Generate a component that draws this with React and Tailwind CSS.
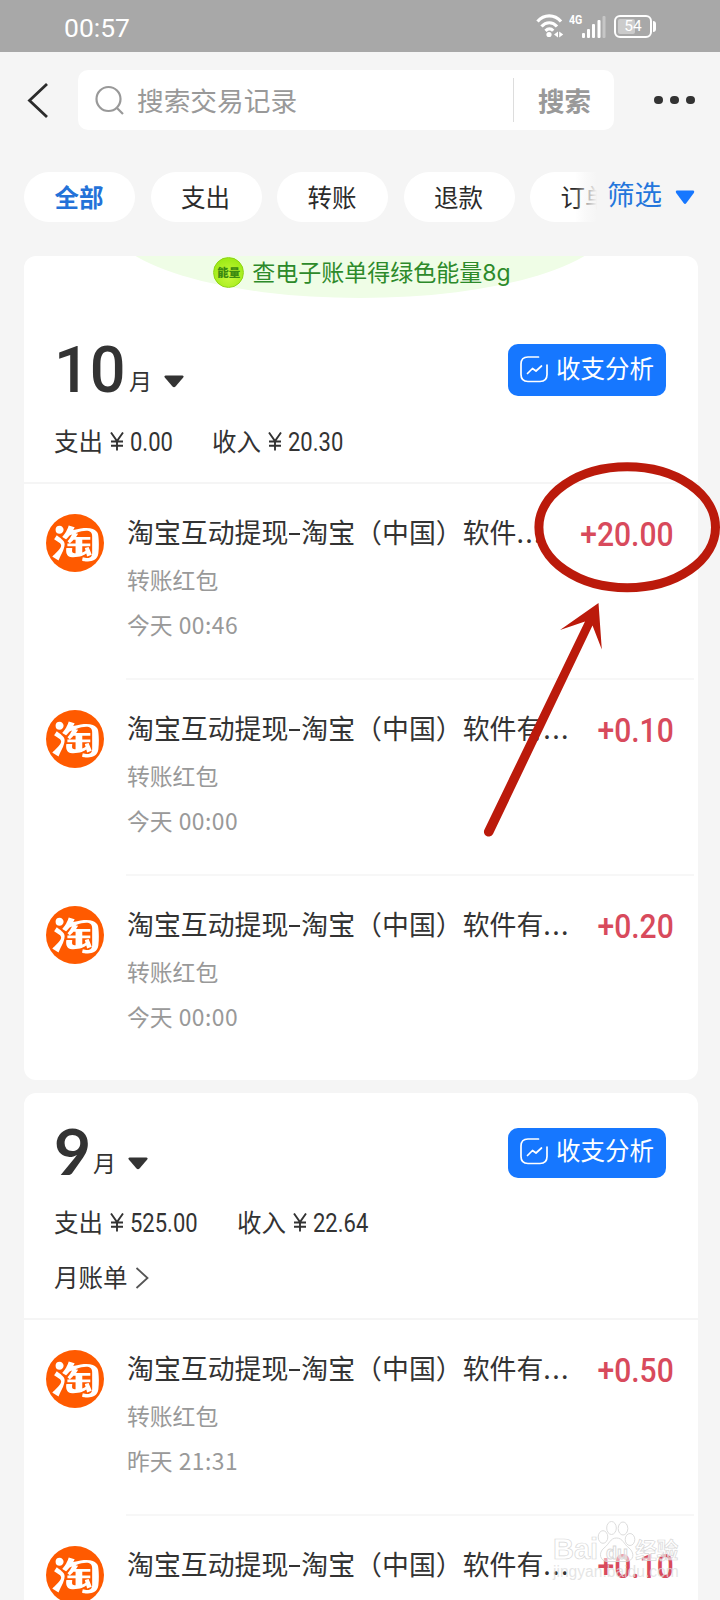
import { AiFillTaobaoCircle } from "react-icons/ai";

const months = [
  {
    month: "10",
    out: "0.00",
    outWidth: "w-[44px]",
    income: "20.30",
    banner: true,
    records: [
      { short: true, time: "今天 00:46", amount: "+20.00" },
      { time: "今天 00:00", amount: "+0.10" },
      { time: "今天 00:00", amount: "+0.20" },
    ],
  },
  {
    month: "9",
    out: "525.00",
    outWidth: "w-[69px]",
    income: "22.64",
    bill: true,
    records: [
      { time: "昨天 21:31", amount: "+0.50" },
      { time: "昨天 21:30", amount: "+0.10" },
    ],
  },
];

const StatusBar = () => (
  <div className="flex h-[52px] shrink-0 items-center justify-between bg-[#a8a8a8] pl-[64px] pr-[64px] text-white">
    <span className="mt-[3px] font-['Roboto'] text-[26.5px] leading-8">00:57</span>
    <div className="flex items-center">
      <svg width="28" height="26" viewBox="0 0 28 26" fill="none" stroke="#fff" strokeWidth="3.200">
        <path d="M1.5 8.5C8 1 18.500 1 25 8.500" />
        <path d="M5.500 13.500C10 8.500 16.500 8.500 21 13.500" />
        <path d="M9.500 17.800C12 15.300 15 15.300 17.200 17.800" />
        <circle cx="13" cy="21.500" r="2.600" fill="#fff" stroke="none" />
        <path d="M22 18.500v6l-4-3zM23.200 18.500v6l4-3z" fill="#fff" stroke="none" />
      </svg>
      <span className="ml-[5px] -mt-[13px] w-[13px] origin-left scale-x-85 font-['Roboto'] text-[12.5px] font-bold leading-3">4G</span>
      <svg className="mt-[2px]" width="24" height="24" viewBox="0 0 24 24" fill="#fff">
        <rect x="0" y="18" width="3" height="5" rx="1" />
        <rect x="5" y="14" width="3" height="9" rx="1" />
        <rect x="10" y="9" width="3" height="14" rx="1" />
        <rect x="15.500" y="5" width="3" height="18" rx="1" />
        <rect x="20.500" y="1" width="3" height="22" rx="1" fillOpacity="0.350" />
      </svg>
      <div className="relative ml-[8px] flex h-[23px] w-[38px] items-center justify-center rounded-[6px] border-2 border-white">
        <div className="absolute left-[2px] top-[2px] h-[15px] w-[17px] rounded-[2px] bg-white/40" />
        <span className="relative font-['Roboto'] text-[15.5px] leading-4">54</span>
      </div>
      <div className="ml-[1px] h-[11px] w-[3px] rounded-r-sm bg-white" />
    </div>
  </div>
);

const Header = () => (
  <div className="flex h-[60px] shrink-0 items-center mt-[18px] pl-[26px]">
    <svg width="22" height="38" viewBox="0 0 22 38" fill="none" stroke="#2b2b2b" strokeWidth="2.800">
      <path d="M21 3L3.500 19.500L21 36" />
    </svg>
    <div className="ml-[30px] flex h-[60px] w-[536px] items-center rounded-[10px] bg-white text-[#999]">
      <svg className="ml-[17px]" width="30" height="30" viewBox="0 0 30 30" fill="none" stroke="#999" strokeWidth="2.200">
        <circle cx="13.500" cy="14" r="12" />
        <path d="M21.500 22.500L28 29" />
      </svg>
      <span className="ml-[12px] text-[26.7px] leading-8">搜索交易记录</span>
      <div className="ml-auto h-[44px] w-[1.500px] bg-[#ddd]" />
      <span className="ml-[24px] mr-[23px] text-[26.5px] font-bold leading-8">搜索</span>
    </div>
    <div className="ml-[40px] flex gap-[7.500px]">
      <i className="h-[8.500px] w-[8.500px] rounded-full bg-[#333]" />
      <i className="h-[8.500px] w-[8.500px] rounded-full bg-[#333]" />
      <i className="h-[8.500px] w-[8.500px] rounded-full bg-[#333]" />
    </div>
  </div>
);

const Chips = () => (
  <div className="mt-[42px] flex h-[50px] shrink-0 pl-6">
    <div className="relative flex w-[573px] gap-[15.500px] overflow-hidden">
      {["全部", "支出", "转账", "退款", "订单"].map((name, i) => (
        <div
          key={name}
          className={`flex h-[50px] w-[111px] shrink-0 items-center justify-center rounded-full bg-white pr-[1px] text-[24.500px] ${
            i === 0 ? "font-bold text-[#2472d8]" : "text-[#2b2b2b]"
          }`}
        >
          {name}
        </div>
      ))}
      <div className="absolute right-0 top-0 h-full w-[22px] bg-linear-to-r from-[#f5f5f5]/0 via-[#f5f5f5]/60 to-[#f5f5f5]" />
    </div>
    <span className="ml-[10px] mt-[2px] h-8 text-[27.500px] leading-[38px] text-[#2476dc]">筛选</span>
    <svg className="ml-[13px] mt-[18px]" width="20" height="15" viewBox="0 0 20 15" fill="#1677ff">
      <path d="M2 0.500H18Q20 1 18.800 3L11.400 13Q10 14.800 8.600 13L1.200 3Q0 1 2 0.500Z" />
    </svg>
  </div>
);

const Banner = () => (
  <div className="relative flex h-[42px] justify-center overflow-hidden">
    <div className="absolute -top-[112px] left-[84px] h-[154px] w-[504px] rounded-[50%] bg-[#effde6]" />
    <div className="relative ml-[2px] flex h-[31px]">
      <span className="mt-px flex h-[31px] w-[31px] items-center justify-center rounded-full border border-[#8fd414] bg-[radial-gradient(circle_at_50%_65%,#c8f83c,#8fe60a)] text-[11.500px] font-black text-[#3c8a10]">
        能量
      </span>
      <span className="ml-[8px] text-[23px] leading-[30px] text-[#2d8a2a]">
        查电子账单得绿色能量<span className="font-['Inter']">8g</span>
      </span>
    </div>
  </div>
);

const AnalyseButton = ({ tall }) => (
  <button className={`flex w-[158px] items-start rounded-[10px] bg-[#1677ff] pl-[12px] text-white ${tall ? "h-[52px] pt-[12px]" : "h-[50px] pt-[10px]"}`}>
    <svg width="28" height="27" viewBox="0 0 28 27" fill="none" stroke="#fff" strokeWidth="1.700" strokeLinecap="round" strokeLinejoin="round">
      <path d="M18.500 1H8Q1 1 1 8V18.500Q1 25.500 8 25.500H20Q27 25.500 27 18.500V9" />
      <path d="M7.500 17.500L12.500 12.500L16 15L21.500 10" />
    </svg>
    <span className="ml-[8px] text-[24.500px] leading-[23px]">收支分析</span>
  </button>
);

// Narrow numerals used for money values
const Money = ({ value, width }) => (
  <span className={`ml-[6px] ${width}`}>
    <span className="inline-block origin-left scale-x-[0.88] font-['Roboto'] text-[25px] leading-8">{value}</span>
  </span>
);

const Yen = () => (
  <svg className="ml-[7px]" width="14" height="19" viewBox="0 0 14 19" fill="none" stroke="#333" strokeWidth="1.900">
    <path d="M1 0.500L7 9L13 0.500M7 9V18.500M1 9.500H13M1 13.800H13" />
  </svg>
);

const MonthHead = ({ data }) => (
  <div className={`flex shrink-0 flex-col border-b-2 border-[#f5f5f5] pl-[30px] pr-[32px] ${data.banner ? "h-[186px]" : "h-[227px]"}`}>
    <div className={`flex h-[52px] items-start justify-between ${data.banner ? "mt-[46px]" : "mt-[35px]"}`}>
      <div className="flex text-[#333]">
        {data.month.length > 1 ? (
          <span className="w-[74px] origin-left scale-x-[0.97] font-['Roboto'] text-[65px] font-medium leading-[53px]">{data.month}</span>
        ) : (
          <span className="w-[38px] font-['Lato'] text-[64px] font-bold leading-[45px]">{data.month}</span>
        )}
        <span className={`ml-px text-[23px] leading-[28px] ${data.banner ? "mt-[22px]" : "mt-[20px]"}`}>月</span>
        <svg className={`ml-[12px] ${data.banner ? "mt-[31px]" : "mt-[29px]"}`} width="20" height="13" viewBox="0 0 20 13" fill="#333">
          <path d="M1.500 0.500H18.500Q20.500 1 19 2.800L11.500 11.500Q10 13 8.500 11.500L1 2.800Q-0.500 1 1.500 0.500Z" />
        </svg>
      </div>
      <AnalyseButton tall={data.banner} />
    </div>
    <div className={`flex h-8 items-center text-[24.500px] text-[#333] ${data.banner ? "mt-[29px]" : "mt-[26px]"}`}>
      <span>支出</span>
      <Yen />
      <Money value={data.out} width={data.outWidth} />
      <span className="ml-[38px]">收入</span>
      <Yen />
      <Money value={data.income} width="w-[58px]" />
    </div>
    {data.bill && (
      <div className="mt-[23px] flex h-8 items-center text-[24.500px] text-[#333]">
        <span>月账单</span>
        <svg className="ml-[7px] mt-[2px]" width="14" height="22" viewBox="0 0 14 22" fill="none" stroke="#555" strokeWidth="1.800">
          <path d="M1.500 1L12.500 11L1.500 21" />
        </svg>
      </div>
    )}
  </div>
);

const Record = ({ data, last }) => (
  <div className="flex h-[196px] shrink-0 pl-[22px]">
    <div className="mt-[30px] flex h-[58px] w-[58px] shrink-0 items-center justify-center overflow-hidden rounded-full bg-white">
      <AiFillTaobaoCircle className="h-[83px] w-[83px] shrink-0 text-[#ff5a00]" />
    </div>
    <div className={`ml-[22px] mr-[4px] flex-1 border-b-2 pt-[29px] ${last ? "border-transparent" : "border-[#f7f7f7]"}`}>
      <div className="flex h-[38px] items-center justify-between pl-px pr-[20px]">
        <span className="flex whitespace-nowrap text-[26.900px] leading-[38px] text-[#333]">
          淘宝互动提现
          <i className="mx-px mt-[20px] h-[2px] w-[11px] bg-[#333]" />
          淘宝（中国）软件{data.short ? "" : "有"}
          <span className="tracking-[1.300px]">...</span>
        </span>
        <span className="mt-[5px] w-0 shrink-0">
          <span className="float-right origin-right scale-x-[0.91] font-['Roboto'] text-[33px] font-medium leading-[38px] text-[#d84a5c]">
            {data.amount}
          </span>
        </span>
      </div>
      <div className="mt-[13px] pl-px text-[22.800px] leading-8 text-[#999]">转账红包</div>
      <div className="mt-[13px] pl-px text-[22.800px] leading-8 text-[#999]">
        {data.time.slice(0, 3)}
        <span className="ml-px tracking-[0.500px]">{data.time.slice(3)}</span>
      </div>
    </div>
  </div>
);

// Hand drawn ring and arrow over the first amount
const Marker = () => (
  <svg className="absolute left-0 top-0" width="720" height="1600" viewBox="0 0 720 1600">
    <ellipse cx="627.200" cy="527.300" rx="88.300" ry="60.500" fill="none" stroke="#bb1a0b" strokeWidth="9" />
    <path
      d="M598.500 603L560 630L585 621.500L484.500 829.500A4.500 4.500 0 0 0 493 834L592.500 625.500L601.800 649.500Z"
      fill="#bb1a0b"
    />
  </svg>
);

const Watermark = () => (
  <div className="absolute left-[553px] top-[1520px] h-[64px] w-[130px] font-['Liberation_Sans'] text-white/60">
    <div className="flex h-[43px] items-end [-webkit-text-stroke:0.700px_#d8d8d8]">
      <span className="text-[29px] font-bold leading-[27px]">Bai</span>
      <svg className="-mx-px" width="39" height="44" viewBox="0 0 39 44" fill="#fff" fillOpacity="0.500" stroke="#d8d8d8" strokeWidth="0.900">
        <ellipse cx="14.500" cy="9" rx="4.800" ry="6.500" />
        <ellipse cx="26" cy="9.500" rx="4.800" ry="6.500" />
        <ellipse cx="6" cy="18" rx="4.800" ry="6.300" />
        <ellipse cx="33" cy="20.500" rx="4.800" ry="6" />
        <path d="M19.500 19C13 19 12.500 25 7 29C1 34 3 42 10 42.500H29C37 42 38 34 32 29C26.500 25 26 19 19.500 19Z" />
        <text x="9" y="39.500" fontSize="18" fontWeight="bold" fontFamily="Liberation Sans">du</text>
      </svg>
      <span className="font-['Noto_Sans_CJK_SC'] text-[21.500px] font-bold leading-[29px]">经验</span>
    </div>
    <div className="text-[15.600px] leading-[18px] text-[#dcdcdc]/75">jingyan.baidu.com</div>
  </div>
);

const App = () => {
  return (
    <div className="relative flex h-[1600px] w-[720px] flex-col overflow-hidden bg-[#f5f5f5] font-['Noto_Sans_CJK_SC',sans-serif]">
      <StatusBar />
      <Header />
      <Chips />
      <div className="mt-[34px] flex flex-col gap-[13px] pl-6 pr-[22px]">
        {months.map((m) => (
          <div key={m.month} className="flex flex-col overflow-hidden rounded-[12px] bg-white pb-[8px]">
            {m.banner && <Banner />}
            <MonthHead data={m} />
            {m.records.map((r, i) => (
              <Record key={i} data={r} last={i === m.records.length - 1} />
            ))}
          </div>
        ))}
      </div>
      <Marker />
      <Watermark />
    </div>
  );
};

export default App;
